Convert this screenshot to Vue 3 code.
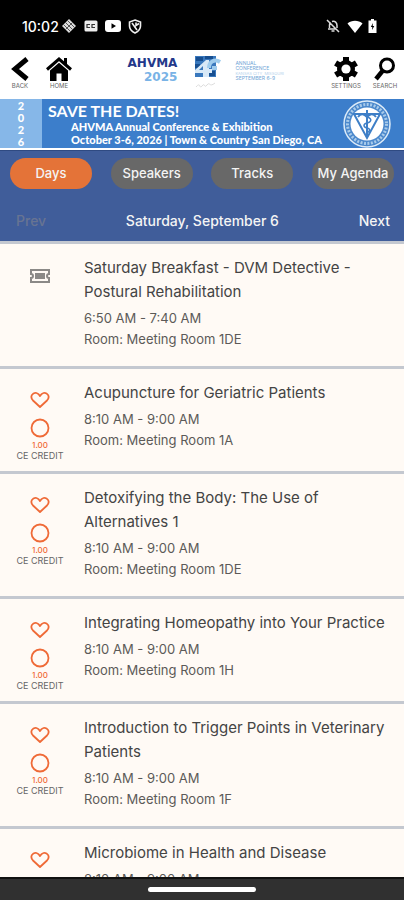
<script setup>
const tabs = ['Days', 'Speakers', 'Tracks', 'My Agenda']
const sessions = [
  { title: 'Saturday Breakfast - DVM Detective - Postural Rehabilitation', time: '6:50 AM - 7:40 AM', room: 'Meeting Room 1DE', ticket: true },
  { title: 'Acupuncture for Geriatric Patients', time: '8:10 AM - 9:00 AM', room: 'Meeting Room 1A' },
  { title: 'Detoxifying the Body: The Use of Alternatives 1', time: '8:10 AM - 9:00 AM', room: 'Meeting Room 1DE' },
  { title: 'Integrating Homeopathy into Your Practice', time: '8:10 AM - 9:00 AM', room: 'Meeting Room 1H' },
  { title: 'Introduction to Trigger Points in Veterinary Patients', time: '8:10 AM - 9:00 AM', room: 'Meeting Room 1F' },
  { title: 'Microbiome in Health and Disease', time: '8:10 AM - 9:00 AM' },
]
</script>

<template>
  <div class="screen">
    <div class="status">
      <span class="clock">10:02</span>
      <svg width="16" height="16" viewBox="0 0 16 16" aria-hidden="true">
        <path d="M8 1l7 7-7 7-7-7z" fill="#ddd" />
        <path d="M4.5 4.5l7 7M6.5 2.5l7 7M2.5 6.5l7 7M11.5 4.5l-7 7" stroke="#333" stroke-width=".8" />
      </svg>
      <svg width="14" height="12" viewBox="0 0 14 12" aria-hidden="true">
        <rect x=".5" y=".5" width="13" height="11" rx="1.5" fill="#eee" />
        <path d="M6 4.5H3v3h3M11 4.5H8v3h3" fill="none" stroke="#333" stroke-width="1.2" />
      </svg>
      <svg width="16" height="12" viewBox="0 0 16 12" aria-hidden="true">
        <rect width="16" height="12" rx="3" fill="#fff" />
        <path d="M6.5 3.3v5.4L11 6z" fill="#000" />
      </svg>
      <svg width="14" height="15" viewBox="0 0 14 15" aria-hidden="true">
        <path d="M7 1l5.5 2v4c0 3.200-2.300 5.500-5.500 7-3.200-1.500-5.500-3.800-5.500-7V3z" fill="none" stroke="#eee" stroke-width="1.600" />
        <path d="M4 4l5 7M8 3.500v3l3-2" fill="none" stroke="#eee" stroke-width="1.600" />
      </svg>
      <span class="spacer"></span>
      <svg width="14" height="14" viewBox="0 0 14 14" aria-hidden="true">
        <path d="M1 1l12 12M2 10h8M3.500 9V6c0-1 .3-2 1-2.700M6 2.500c3-.8 5 1 5 4V9M5.500 12h3" fill="none" stroke="#ddd" stroke-width="1.500" />
      </svg>
      <svg class="wifi" width="16" height="13" viewBox="0 0 16 13" aria-hidden="true">
        <path d="M8 13L.5 3.500C4.500-.2 11.500-.2 15.500 3.500z" fill="#fff" />
      </svg>
      <svg width="9" height="14" viewBox="0 0 9 14" aria-hidden="true">
        <path d="M3 0h3v1.500h2.500V14H.5V1.500H3z" fill="#fff" />
        <path d="M5 4L2.800 8h1.500L4 11l2.300-4H4.700z" fill="#000" />
      </svg>
    </div>

    <header class="header">
      <button class="tool back">
        <svg width="20" height="26" viewBox="0 0 20 26" aria-hidden="true"><path d="M17 3L5 13l12 10" fill="none" stroke="#000" stroke-width="5" /></svg>
        <span>BACK</span>
      </button>
      <button class="tool home">
        <svg width="28" height="26" viewBox="0 0 28 26" aria-hidden="true">
          <path d="M2 13.500L14 3l12 10.500M20.500 2v6" fill="none" stroke="#000" stroke-width="3" />
          <path d="M5 14.500l9-7.800 9 7.800V25h-6.500v-7.500h-5V25H5z" />
        </svg>
        <span>HOME</span>
      </button>
      <div class="brand">
        <div class="name"><b>AHVMA</b><strong>2025</strong></div>
        <svg class="mark" width="28" height="36" viewBox="0 0 28 36" aria-hidden="true">
          <path d="M1 1h21v21H1z" fill="#3978bd" />
          <path d="M2 2h7v4H2zM11 1h8v3h-8zM1 9h5v4H1zM14 16h7v5h-7z" fill="#174f91" />
          <path d="M1 15L12 5h3v9h3v4h-3v4H9v-4H1z" fill="#d8e9f7" />
          <path d="M9 11l-4 4h4z" fill="#3978bd" />
          <path d="M26 7c-5-3-11-1-11 6M18 13h5" fill="none" stroke="#9fcced" stroke-width="4" />
          <path d="M2 32c5-6 3 3 6-1s2 3 5-1 2 3 8-2" fill="none" stroke="#ddd" />
        </svg>
        <div class="tagline">
          <span>ANNUAL</span><span>CONFERENCE</span><span class="pale">KANSAS CITY, MISSOURI</span><span>SEPTEMBER 6-9</span>
        </div>
      </div>
      <button class="tool settings">
        <svg width="26" height="26" viewBox="0 0 26 26" aria-hidden="true">
          <g stroke="#000" stroke-width="6"><path d="M13 1v24M2.600 7l20.800 12M2.600 19L23.400 7" /></g>
          <circle cx="13" cy="13" r="9" /><circle cx="13" cy="13" r="4.600" fill="#fff" />
        </svg>
        <span>SETTINGS</span>
      </button>
      <button class="tool search">
        <svg width="24" height="26" viewBox="0 0 24 26" aria-hidden="true">
          <circle cx="14" cy="9.500" r="6.500" fill="none" stroke="#000" stroke-width="3" />
          <path d="M9.500 15L3 23" stroke="#000" stroke-width="4.500" />
        </svg>
        <span>SEARCH</span>
      </button>
    </header>

    <a class="banner" href="#">
      <span class="year"><i>2</i><i>0</i><i>2</i><i>6</i></span>
      <span class="promo">
        <strong>SAVE THE DATES!</strong>
        <span>AHVMA Annual Conference &amp; Exhibition</span>
        <span>October 3-6, 2026 | Town &amp; Country San Diego, CA</span>
      </span>
      <svg class="seal" width="50" height="50" viewBox="0 0 50 50" aria-hidden="true">
        <circle cx="25" cy="25" r="23" fill="#4b88cc" stroke="#dcebf8" stroke-width="1.500" />
        <circle cx="25" cy="25" r="19.500" fill="none" stroke="#a9cbea" stroke-width="3" stroke-dasharray="2 1.500" />
        <circle cx="25" cy="25" r="16.500" fill="#fff" />
        <path d="M11 15h28M12 15l13 24 13-24" fill="none" stroke="#3e7fc7" stroke-width="2" />
        <path d="M25 11v27M16 18c3-4 6-3 9 0 3-3 6-4 9 0" fill="none" stroke="#3e7fc7" stroke-width="2" />
        <path d="M25 18c6 2 4 5 0 6s-4 4 0 5 3 3 0 5" fill="none" stroke="#3e7fc7" stroke-width="1.500" />
      </svg>
    </a>

    <nav class="nav">
      <div class="tabs">
        <button v-for="(tab, i) in tabs" :key="tab" :class="{ active: i === 0 }">{{ tab }}</button>
      </div>
      <div class="days">
        <button class="prev" disabled>Prev</button>
        <span>Saturday, September 6</span>
        <button class="next">Next</button>
      </div>
    </nav>

    <main class="list">
      <article v-for="s in sessions" :key="s.title" class="session">
        <div class="marks">
          <svg v-if="s.ticket" class="ticket" width="20" height="14" viewBox="0 0 20 14" aria-hidden="true">
            <path d="M1 1h18v4a2 2 0 000 4v4H1V9a2 2 0 000-4z" fill="none" stroke="#8b8987" stroke-width="2" />
            <path d="M5 4h10v6H5z" fill="#8b8987" />
          </svg>
          <template v-else>
            <button class="icon" aria-label="Add to favorites">
              <svg width="20" height="18" viewBox="0 0 20 18" aria-hidden="true"><path d="M10 16L3 9.500C-.8 5.500 3 1 6.500 2 8 2.400 9.200 3.500 10 5c.8-1.500 2-2.600 3.500-3 3.500-1 7.300 3.500 3.500 7.500z" fill="none" stroke="#ef6a37" stroke-width="1.800" stroke-linejoin="round" /></svg>
            </button>
            <template v-if="s.room">
              <button class="icon" aria-label="Claim credit">
                <svg width="20" height="20" viewBox="0 0 20 20" aria-hidden="true"><circle cx="10" cy="10" r="8.500" fill="none" stroke="#ef6a37" stroke-width="1.800" /></svg>
              </button>
              <span class="amount">1.00</span>
              <span class="credit">CE CREDIT</span>
            </template>
          </template>
        </div>
        <div class="info">
          <h2>{{ s.title }}</h2>
          <p>{{ s.time }}</p>
          <p v-if="s.room">Room: {{ s.room }}</p>
        </div>
      </article>
    </main>

    <footer class="gesture"><span></span></footer>
  </div>
</template>

<style>
body { margin: 0; background: #fffaf5; }
</style>

<style scoped>
* { box-sizing: border-box; }
.screen { height: 100vh; display: flex; flex-direction: column; overflow: hidden; font-family: Inter, "Liberation Sans", sans-serif; background: #fffaf5; }
button { border: 0; padding: 0; background: none; font: inherit; color: inherit; cursor: pointer; }
.status { flex: none; height: 50px; display: flex; align-items: center; padding: 2px 27px 0 22px; background: #000; color: #fff; }
.clock { width: 39px; font-size: 14px; font-weight: 500; white-space: nowrap; }
.status svg + svg { margin-left: 7px; }
.spacer { flex: 1; }
.status .wifi + svg { margin-left: 5px; }

.header { flex: none; height: 48px; display: flex; background: #fff; padding: 6px 0 0 8px; }
.tool { display: flex; flex-direction: column; align-items: center; font-size: 6px; line-height: 8px; color: #666; height: 34px; }
.back { width: 24px; }
.home { width: 28px; margin-left: 13px; }
.settings { width: 40px; }
.search { width: 38px; }
.brand { flex: 1; display: flex; justify-content: center; padding-left: 10px; }
.name { display: flex; flex-direction: column; align-items: flex-end; font-family: "DejaVu Sans", sans-serif; font-size: 12px; line-height: 14px; color: #23388a; }
.name strong { color: #79b3e6; }
.mark { margin: -1px 0 0 17px; flex: none; }
.tagline { display: flex; flex-direction: column; margin: 5px 0 0 13px; font-size: 5px; line-height: 5px; color: #6fa5d6; white-space: nowrap; width: 46px; }
.pale { color: #b5d2ec; font-size: 4px; }

.banner { flex: none; height: 52px; display: flex; align-items: center; border: solid #fff; border-width: 1px 0 2px; background: #3c7ecb; color: #fff; text-decoration: none; font-family: Lato, sans-serif; }
.year { align-self: stretch; width: 42px; display: flex; flex-direction: column; justify-content: center; background: #86b7e8; text-align: center; }
.year i { font-style: normal; font-weight: 900; font-size: 11px; line-height: 12px; }
.promo { flex: 1; display: flex; flex-direction: column; padding-left: 29px; font-size: 11px; line-height: 13px; font-weight: 900; white-space: nowrap; }
.promo strong { margin-left: -23px; font-size: 16px; line-height: 18px; font-weight: 700; }
.seal { margin-right: 12px; flex: none; }

.nav { flex: none; height: 94px; padding: 7px 10px 0; background: #405d9a; color: #f4f4f4; border-top: 1px solid #2f4a82; border-bottom: 3px solid #c4c8d0; font-size: 13px; font-weight: 500; }
.tabs { display: flex; justify-content: space-between; align-items: center; }
.tabs button { width: 82px; height: 31px; border-radius: 16px; background: #686868; padding-bottom: 2px; white-space: nowrap; }
.tabs .active { background: #e47338; }
.days { display: flex; justify-content: space-between; align-items: center; height: 32px; margin-top: 15px; padding: 0 4px 0 6px; font-size: 14px; }
.days .prev { color: #687492; cursor: default; }

.list { flex: 1; min-height: 0; overflow-x: hidden; overflow-y: auto; scrollbar-width: none; }
.session { display: flex; min-height: 105px; border-bottom: 3px solid #c4c8d0; }
.marks { flex: none; width: 80px; padding-top: 22px; display: flex; flex-direction: column; align-items: center; }
.ticket { margin-top: 3px; }
.icon { display: flex; margin-bottom: 9px; }
.icon + .icon { margin-bottom: 2px; }
.amount { font-size: 8px; line-height: 10px; color: #ef6a37; font-weight: 500; }
.credit { font-size: 9px; line-height: 12px; color: #666; }
.info { flex: 1; padding: 12px 12px 16px 4px; color: #444; }
h2 { margin: 0 0 4px; font-size: 15px; line-height: 24px; font-weight: 400; }
p { margin: 0; font-size: 13px; line-height: 21px; color: #5c5a58; }

.gesture { flex: none; height: 23px; display: flex; justify-content: center; align-items: center; background: #303030; border-top: 2px solid #111; }
.gesture span { width: 108px; height: 5px; border-radius: 3px; background: #fff; }
</style>
